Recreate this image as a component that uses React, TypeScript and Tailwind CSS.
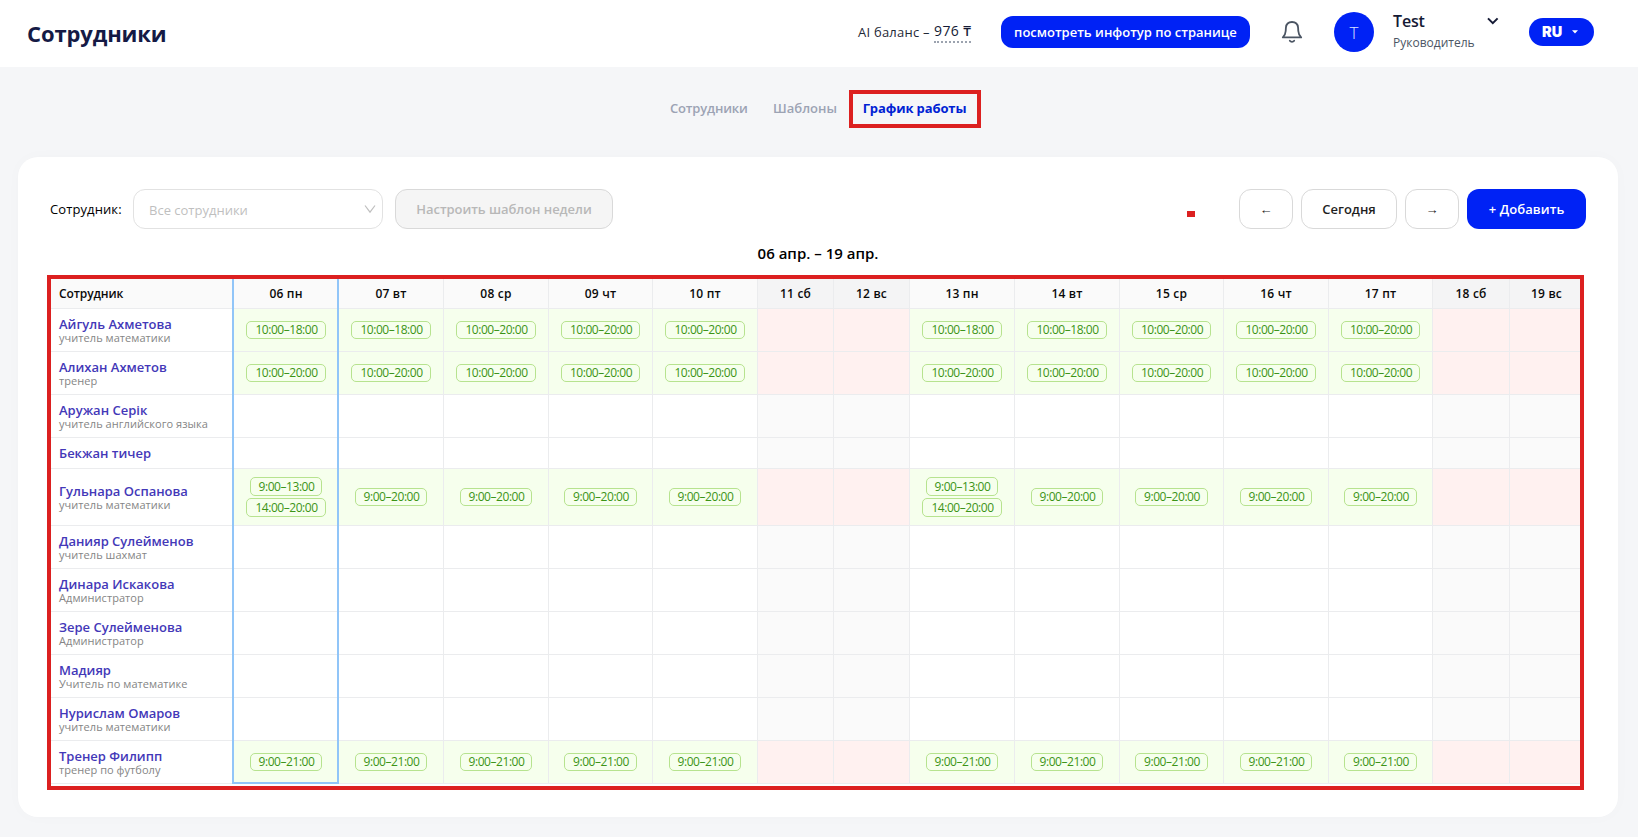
import React from 'react';
import clsx from 'clsx';

type Day = {
  label: string;
  width: string;
  weekend?: boolean;
};

type Employee = {
  name: string;
  role?: string;
  height: string;
  // Shifts by weekday (Mon–Fri), one list per week
  weeks?: string[][][];
};

const DAYS: Day[] = [
  { label: '06 пн', width: 'w-[105px]' },
  { label: '07 вт', width: 'w-[105px]' },
  { label: '08 ср', width: 'w-[105px]' },
  { label: '09 чт', width: 'w-[104px]' },
  { label: '10 пт', width: 'w-[105px]' },
  { label: '11 сб', width: 'w-[76px]', weekend: true },
  { label: '12 вс', width: 'w-[76px]', weekend: true },
  { label: '13 пн', width: 'w-[105px]' },
  { label: '14 вт', width: 'w-[105px]' },
  { label: '15 ср', width: 'w-[104px]' },
  { label: '16 чт', width: 'w-[105px]' },
  { label: '17 пт', width: 'w-[104px]' },
  { label: '18 сб', width: 'w-[77px]', weekend: true },
  { label: '19 вс', width: 'w-[74px]', weekend: true },
];

const SHORT = ['10:00–18:00'];
const LONG = ['10:00–20:00'];
const SPLIT = ['9:00–13:00', '14:00–20:00'];
const EARLY = ['9:00–20:00'];
const COACH = ['9:00–21:00'];

const EMPLOYEES: Employee[] = [
  {
    name: 'Айгуль Ахметова',
    role: 'учитель математики',
    height: 'h-[43px]',
    weeks: [
      [SHORT, SHORT, LONG, LONG, LONG],
      [SHORT, SHORT, LONG, LONG, LONG],
    ],
  },
  {
    name: 'Алихан Ахметов',
    role: 'тренер',
    height: 'h-[43px]',
    weeks: [
      [LONG, LONG, LONG, LONG, LONG],
      [LONG, LONG, LONG, LONG, LONG],
    ],
  },
  { name: 'Аружан Серік', role: 'учитель английского языка', height: 'h-[43px]' },
  { name: 'Бекжан тичер', height: 'h-[31px]' },
  {
    name: 'Гульнара Оспанова',
    role: 'учитель математики',
    height: 'h-[57px]',
    weeks: [
      [SPLIT, EARLY, EARLY, EARLY, EARLY],
      [SPLIT, EARLY, EARLY, EARLY, EARLY],
    ],
  },
  { name: 'Данияр Сулейменов', role: 'учитель шахмат', height: 'h-[43px]' },
  { name: 'Динара Искакова', role: 'Администратор', height: 'h-[43px]' },
  { name: 'Зере Сулейменова', role: 'Администратор', height: 'h-[43px]' },
  { name: 'Мадияр', role: 'Учитель по математике', height: 'h-[43px]' },
  { name: 'Нурислам Омаров', role: 'учитель математики', height: 'h-[43px]' },
  {
    name: 'Тренер Филипп',
    role: 'тренер по футболу',
    height: 'h-[43px]',
    weeks: [
      [COACH, COACH, COACH, COACH, COACH],
      [COACH, COACH, COACH, COACH, COACH],
    ],
  },
];

function BellIcon() {
  return (
    <svg width="22" height="24" viewBox="0 0 22 24" fill="none" stroke="#4b5563" strokeWidth="1.8" strokeLinejoin="round" strokeLinecap="round">
      <path d="M1.8 17.4h18.4c-2.100-1.700-2.700-3.600-2.900-6.400l-.2-3.300C16.800 4 14.400 2 11 2S5.200 4 4.900 7.700L4.700 11c-.2 2.800-.8 4.700-2.900 6.400Z" />
      <path d="M8.800 20.800c1 1.400 3.400 1.400 4.400 0" />
    </svg>
  );
}

function Header() {
  return (
    <header className="flex h-[67px] items-start bg-white pr-[44px] pl-[27px]">
      <h1 className="mt-4 text-[22px] leading-[34px] font-bold tracking-[-0.12px] text-[#151a45]">Сотрудники</h1>

      <div className="mt-[21px] ml-auto flex w-[143px] items-start">
        <span className="mt-[2px] w-[76px] text-[13px] leading-[18px] tracking-[0.23px] text-[#1f2937]">AI баланс –</span>
        <span className="h-[22px] border-b-2 border-dotted border-[#9ca3af] text-[14px] leading-[19px] font-medium tracking-[0.4px] text-[#151a35]">
          976 ₸
        </span>
      </div>

      <button className="mt-4 h-8 w-[249px] rounded-[12px] bg-[#0022f5] pt-px text-[13px] font-semibold whitespace-nowrap text-white">
        посмотреть инфотур по странице
      </button>

      <button className="mt-[20px] ml-[31px]">
        <BellIcon />
      </button>

      <div className="mt-3 ml-[31px] flex h-10 w-10 items-center justify-center rounded-full bg-[#0022f5] pt-[2px] text-[17px] font-light text-[#dbe4ff]">
        T
      </div>

      <div className="mt-[11px] ml-[19px] w-[94px]">
        <div className="text-[16px] leading-5 font-semibold tracking-[-0.15px] text-[#151a35]">Test</div>
        <div className="mt-[3px] text-[12px] leading-[17px] text-[#4b5563]">Руководитель</div>
      </div>

      <svg className="mt-[17px]" width="12" height="8" viewBox="0 0 12 8" fill="none" stroke="#151a35" strokeWidth="2">
        <path d="M1 1.400 5.800 6.200 10.600 1.400" />
      </svg>

      <button className="mt-[18px] ml-[30px] flex h-7 w-[65px] items-center rounded-full bg-[#0022f5] pl-[13px] font-['Inter',sans-serif] text-[14.500px] font-black text-white">
        RU
        <svg className="ml-[10px]" width="6" height="4" viewBox="0 0 6 4" fill="currentColor">
          <path d="M0 .3h6L3 3.600Z" />
        </svg>
      </button>
    </header>
  );
}

function Tabs() {
  return (
    <nav className="flex h-[90px] pt-[24px] pl-[670px] text-[13px] leading-[18px] font-semibold text-[#9ca3b4]">
      <a className="mt-[8px] w-[103px] tracking-[-0.17px]">Сотрудники</a>
      <a className="mt-[8px] w-[77px]">Шаблоны</a>
      <a className="-mt-px -ml-px flex h-[38px] w-[132px] items-center justify-center border-4 border-[#dc2020] pr-px pb-[2px] font-bold tracking-[-0.12px] whitespace-nowrap text-[#0022d4]">
        График работы
      </a>
    </nav>
  );
}

function Toolbar() {
  const btn = 'h-10 rounded-[12px] border border-[#d9d9d9] bg-white pt-px text-[13px] font-semibold text-[#1f1f1f]';

  return (
    <div className="flex h-10 items-center">
      <span className="w-[83px] pt-px text-[13px] tracking-[0.1px] text-black">Сотрудник:</span>
      <div className="flex h-10 w-[250px] items-center justify-between rounded-[12px] border border-[#e2e2e2] pr-[6px] pl-[15px] text-[13px] text-[#bfbfbf]">
        <span className="mt-[3px]">Все сотрудники</span>
        <svg width="12" height="10" viewBox="0 0 12 10" fill="none" stroke="#bfbfbf" strokeWidth="1.200">
          <path d="M1 1.500 6 8.200 11 1.500" />
        </svg>
      </div>
      <button className="ml-3 h-10 w-[218px] rounded-[12px] border border-[#d9d9d9] bg-[#f5f5f5] pt-px text-[13px] font-semibold tracking-[-0.05px] text-[#b8b8b8]">
        Настроить шаблон недели
      </button>

      <span className="mt-[10px] mr-11 ml-auto h-[6px] w-[8px] bg-[#dc2020]" />
      <div className="flex gap-2">
        <button className={clsx(btn, 'w-[54px]')}>←</button>
        <button className={clsx(btn, 'w-[96px]')}>Сегодня</button>
        <button className={clsx(btn, 'w-[54px]')}>→</button>
        <button className="h-10 w-[119px] rounded-[12px] bg-[#0022f5] pt-px text-[13px] font-semibold tracking-[0.1px] text-white">+ Добавить</button>
      </div>
    </div>
  );
}

function ShiftCell({ day, index, employee }: { day: Day; index: number; employee: Employee }) {
  const shifts = day.weekend ? [] : employee.weeks?.[index < 7 ? 0 : 1][index % 7] ?? [];

  return (
    <td
      className={clsx(
        'border-r border-b border-[#ebecee] p-0',
        day.weekend && (employee.weeks ? 'bg-[#fff1f0]' : 'bg-[#fafafa]'),
        !day.weekend && employee.weeks && 'bg-[#f6ffed]',
      )}
    >
      <div className="flex flex-col items-center gap-[2.500px]">
        {shifts.map((shift) => (
          <span
            key={shift}
            className="flex h-[18.500px] items-center rounded-[5px] border border-[#b7e38f] pr-[7px] pl-[8px] text-[12px] tracking-[-0.45px] text-[#3c9416]"
          >
            {shift}
          </span>
        ))}
      </div>
    </td>
  );
}

function ScheduleTable() {
  return (
    <div className="relative mt-[14px] w-[1534px]">
      <table className="w-[1534px] table-fixed border-separate border-spacing-0">
        <thead>
          <tr className="h-[31px] text-[12px] font-semibold text-[#0a0a0a]">
            <th className="w-[184px] border-b border-[#ebecee] bg-[#fafafa] p-0 pt-[2px] pl-[9px] text-left font-semibold tracking-[-0.09px]">Сотрудник</th>
            {DAYS.map((day) => (
              <th
                key={day.label}
                className={clsx('border-r border-b border-[#ebecee] p-0 pt-[2px] font-semibold tracking-[0.2px]', day.width, day.weekend ? 'bg-[#f4f4f5]' : 'bg-[#fafafa]')}
              >
                {day.label}
              </th>
            ))}
          </tr>
        </thead>
        <tbody>
          {EMPLOYEES.map((employee) => (
            <tr key={employee.name} className={employee.height}>
              <td className="border-b border-[#ebecee] p-0 pl-[9px]">
                <div className="text-[13px] leading-4 font-semibold text-[#4338b8]">{employee.name}</div>
                {employee.role && <div className="text-[11px] leading-3 tracking-[0.05px] text-[#858585]">{employee.role}</div>}
              </td>
              {DAYS.map((day, i) => (
                <ShiftCell key={day.label} day={day} index={i} employee={employee} />
              ))}
            </tr>
          ))}
        </tbody>
      </table>

      {/* Current day column */}
      <div className="absolute top-0 bottom-0 left-[182px] w-[107px] border-2 border-t-0 border-[#91c5f8]" />
      {/* Red frame around the schedule */}
      <div className="absolute -top-[3px] right-0 -bottom-[6px] -left-[3px] border-4 border-[#dc2020]" />
    </div>
  );
}

export default function App() {
  return (
    <div className="min-h-[837px] bg-[#f5f6f8] font-['Open_Sans','Noto_Sans',sans-serif]">
      <Header />
      <Tabs />
      <main className="ml-[18px] w-[1600px] rounded-[20px] bg-white px-8 pt-8 pb-[33px] shadow-[0_0_16px_rgba(15,23,42,0.02)]">
        <Toolbar />
        <div className="mt-[14px] text-center text-[15px] leading-[21px] font-semibold text-black">06 апр. – 19 апр.</div>
        <ScheduleTable />
      </main>
    </div>
  );
}
